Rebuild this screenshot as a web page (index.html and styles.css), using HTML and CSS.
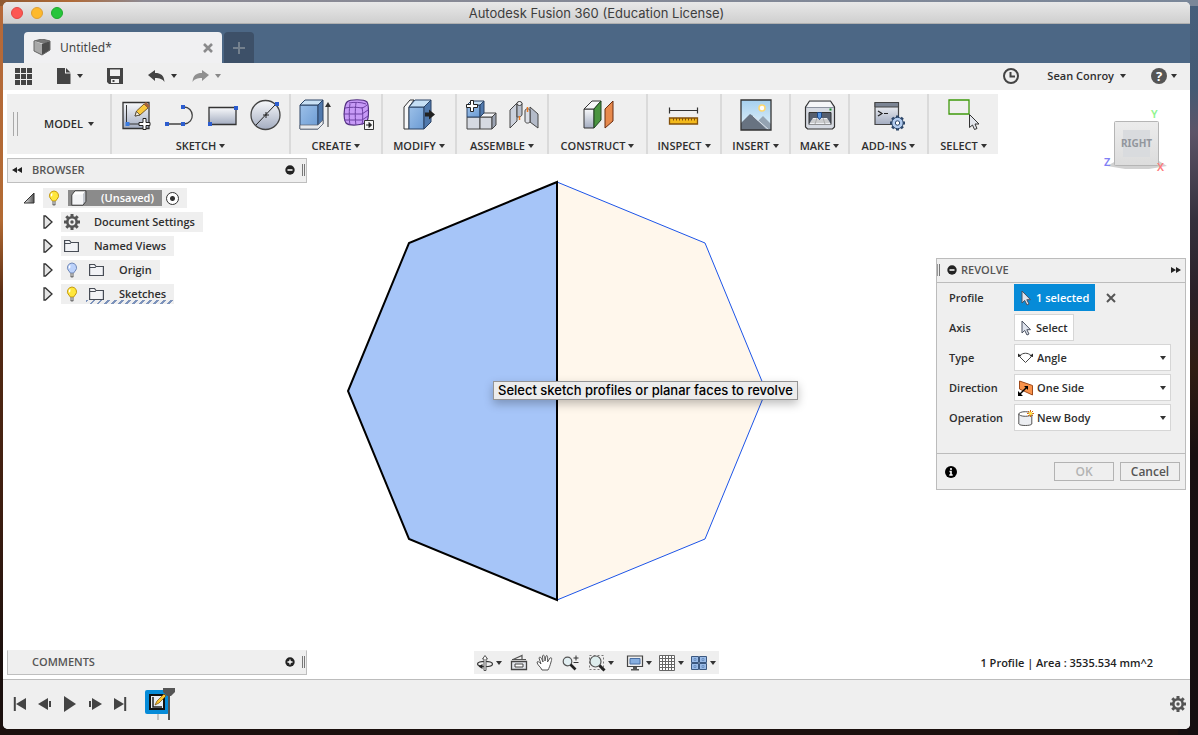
FILE: index.html
```html
<!DOCTYPE html>
<html lang="en">
<head>
<meta charset="utf-8">
<title>Autodesk Fusion 360 (Education License)</title>
<link rel="stylesheet" href="styles.css">
</head>
<body>
<svg class="defs" aria-hidden="true">
  <defs>
    <linearGradient id="steel" x1="0" y1="0" x2="0" y2="1"><stop offset="0" stop-color="#f8f9fb"/><stop offset="1" stop-color="#a3acc0"/></linearGradient>
    <linearGradient id="blue" x1="0" y1="0" x2="1" y2="1"><stop offset="0" stop-color="#9cc0e8"/><stop offset="1" stop-color="#6b9bd4"/></linearGradient>
    <linearGradient id="cubeface" x1="0" y1="0" x2="0" y2="1"><stop offset="0" stop-color="#ececec"/><stop offset="1" stop-color="#dcdcdc"/></linearGradient>
    <linearGradient id="tri" x1="0" y1="0" x2="1" y2="0"><stop offset="0" stop-color="#eee"/><stop offset="1" stop-color="#555"/></linearGradient>
    <linearGradient id="sky" x1="0" y1="0" x2="0" y2="1"><stop offset="0" stop-color="#a5d0ee"/><stop offset="1" stop-color="#e4f2fa"/></linearGradient>
  </defs>
  <symbol id="gear" viewBox="0 0 16 16"><circle cx="8" cy="8" r="4.700" fill="none" stroke="currentColor" stroke-width="2.600"/><circle cx="8" cy="8" r="1.700" fill="currentColor"/><path d="M8 0v3M8 13v3M0 8h3M13 8h3M2.300 2.300l2.200 2.200M11.500 11.500l2.200 2.200M2.300 13.700l2.200-2.200M11.500 4.500l2.200-2.200" stroke="currentColor" stroke-width="3"/></symbol>
  <symbol id="bulb" viewBox="0 0 16 16"><path d="M8 1a4.700 4.700 0 0 0-3.200 8c.9.800 1.300 1.300 1.400 2h3.600c.1-.7.500-1.200 1.400-2A4.700 4.700 0 0 0 8 1z" fill="var(--bulb)" stroke="var(--bulb-edge)"/><path d="M6.300 3.500c-1 .7-1 2-.7 2.800" stroke="#fff" stroke-width="1.500" fill="none"/><path d="M6 11.500h4v2.500l-1 1.500H7l-1-1.500z" fill="#777"/><path d="M6 13h4" stroke="#ddd"/></symbol>
  <symbol id="folder" viewBox="0 0 16 16"><path d="M.6 13.500V2.500h4.900l1.500 2h7.400v9z" fill="#f2f3f6" stroke="#474c55" stroke-width="1.200"/><path d="M1 5.500h5.500L7.500 4.500" fill="none" stroke="#474c55"/></symbol>
  <symbol id="twist" viewBox="0 0 10 14"><path d="M1 1h1.500L9 7l-6.500 6H1z" fill="#e4e4e4" stroke="#333" stroke-width="1.300"/></symbol>
  <symbol id="arrow" viewBox="0 0 12 16"><path d="M2 1v12l2.700-2.600L7 15l2-1-2.200-4.300h3.700z" fill="#dfe4ee" stroke="#4a5160"/></symbol>
</svg>

<div class="window">
  <header class="titlebar">
    <div class="lights"><span class="light red"></span><span class="light amber"></span><span class="light green"></span></div>
    <span class="title">Autodesk Fusion 360 (Education License)</span>
    <span></span>
  </header>

  <nav class="tabs">
    <div class="tab">
      <svg width="18" height="18" viewBox="0 0 18 18"><path d="M1 2l8-2 8 2-6 3z" fill="#777"/><path d="M1 2l8 3v11L1 12z" fill="#a8a8a8"/><path d="M9 5l8-3v9l-8 5z" fill="#4c4c4c"/><path d="M1 2l8-2 8 2v9l-8 5-8-4z" fill="none" stroke="#666"/></svg>
      <span class="tab-name">Untitled*</span>
      <button class="tab-close" aria-label="Close tab"><svg width="10" height="10" viewBox="0 0 10 10"><path d="M1 1l8 8M9 1L1 9" stroke="#8a8a8c" stroke-width="2.600"/></svg></button>
    </div>
    <button class="tab-new" aria-label="New tab"><svg width="12" height="12" viewBox="0 0 12 12"><path d="M6 0v12M0 6h12" stroke="#74808d" stroke-width="2"/></svg></button>
  </nav>

  <div class="quickbar">
    <button aria-label="Data panel"><svg width="17" height="17" viewBox="0 0 17 17"><path d="M0 2.500h17M0 8.500h17M0 14.500h17" stroke="#444" stroke-width="5" stroke-dasharray="5 1"/></svg></button>
    <button class="q-file" aria-label="File"><svg width="14" height="16" viewBox="0 0 14 16"><path d="M0 0h8v5.500h5.500V16H0z" fill="#444"/><path d="M9 0l4.500 4.500H9z" fill="#444"/></svg><i class="caret"></i></button>
    <button class="q-save" aria-label="Save"><svg width="16" height="16" viewBox="0 0 16 16"><path d="M0 0h16v16H2l-2-2z" fill="#444"/><path d="M3 1.500h10v6.500H3zM4 11h8v4H4z" fill="#f0f0f0"/><path d="M5.500 12h2v2h-2z" fill="#444"/></svg></button>
    <button class="q-undo" aria-label="Undo"><svg width="17" height="14" viewBox="0 0 17 14"><path d="M0 6L7 1v3c6 0 9 2.500 9.500 9-2-3-4.500-4-9.500-4v3z" fill="#444"/></svg><i class="caret"></i></button>
    <button class="q-redo" aria-label="Redo"><svg width="17" height="14" viewBox="0 0 17 14"><path d="M17 6l-7-5v3C4 4 1 6.500.5 13c2-3 4.500-4 9.500-4v3z" fill="#909090"/></svg><i class="caret dim"></i></button>
    <button class="q-clock" aria-label="Job status"><svg width="16" height="16" viewBox="0 0 16 16"><circle cx="8" cy="8" r="7" fill="none" stroke="#444" stroke-width="2"/><path d="M7.500 4v4.500H12" fill="none" stroke="#444" stroke-width="2"/></svg></button>
    <button class="q-user">Sean Conroy<i class="caret"></i></button>
    <button class="q-help" aria-label="Help"><span class="help">?</span><i class="caret"></i></button>
  </div>

  <main class="workspace">
    <svg class="sketch" width="426" height="426" viewBox="0 0 426 426">
      <path d="M213 4L361 65 422 213 361 361 213 422z" fill="#fff7ec" stroke="#1c54e8"/>
      <path d="M213 4L65 65 4 213l61 148 148 61z" fill="#a6c5f8" stroke="#000" stroke-width="2"/>
    </svg>

    <div class="ribbon">
      <div class="group g-model"><span class="grip"></span><button>MODEL<i class="caret"></i></button></div>
      <div class="group g-sketch">
        <div class="tools">
          <svg viewBox="0 0 32 32"><path d="M3 3.500h26v26H3z" fill="url(#steel)" stroke="#333" stroke-width="1.300"/><path d="M6.500 6v19H20" fill="none" stroke="#333"/><path d="M5.500 23h4v4h-4z" fill="#3a7be0"/><path d="M15 17l1.500-5L24 5l4 4-8 7z" fill="#f9c83c" stroke="#5b3d12" stroke-width=".8"/><path d="M24 5l2-2 4 4-2 2z" fill="#a4633c"/><path d="M15 17l1.500-4.500L20 16z" fill="#f6ead3" stroke="#333" stroke-width=".7"/><path d="M23 19.500h3v4h4v3h-4v4h-3v-4h-4v-3h4z" fill="#fff" stroke="#222"/></svg>
          <svg viewBox="0 0 32 32"><path d="M4 25h17c12-1 10-17 0-17h-1" fill="none" stroke="#444" stroke-width="1.300"/><path d="M2 23h4v4H2zM18 23h4v4h-4zM18 6h4v4h-4z" fill="#2c5dcf"/></svg>
          <svg viewBox="0 0 32 32"><path d="M3 8.500h27v17H3z" fill="url(#steel)" stroke="#333" stroke-width="1.300"/><path d="M2 23h4v4H2zM28 7h4v4h-4z" fill="#2c5dcf"/></svg>
          <svg viewBox="0 0 32 32"><circle cx="16.500" cy="16" r="14.500" fill="url(#steel)" stroke="#444" stroke-width="1.300"/><path d="M7 26L26 6M14 16h6M17 13v6" stroke="#222"/><path d="M26 3h4v4h-4z" fill="#2c5dcf"/></svg>
        </div>
        <button>SKETCH<i class="caret"></i></button>
      </div>
      <div class="group g-create">
        <div class="tools">
          <svg viewBox="0 0 32 32"><path d="M1 6h18v24H1z" fill="url(#blue)" stroke="#2b4365"/><path d="M1 6l5-5h18l-5 5z" fill="#c8e0f4" stroke="#2b4365"/><path d="M19 6l5-5v24l-5 5z" fill="#5079ad" stroke="#2b4365"/><path d="M1 26h18l5-5v4l-5 5H1z" fill="#e6e9ed" stroke="#59606c" stroke-width=".7"/><path d="M29 6v22" stroke="#333"/><path d="M26 8l3-5 3 5z" fill="#333"/></svg>
          <svg viewBox="0 0 32 32"><path d="M5 3c3-3 17-3 20 0 2 3 2 16 0 19-4 5-18 5-21 2-3-4-2-18 1-21z" fill="#c79af7" stroke="#523080" stroke-width="1.200"/><path d="M3 9c5-1 12-1 17 0 3-1 5-3 6-4M8 5C7 10 7 21 8 26M14 4c-1 6-1 17 0 22M20 8c1 5 1 13 0 18M1.500 15H20l6-4M2 21h18l6-4M7 4c5-1 12-1 17 1" fill="none" stroke="#6c40a3"/><path d="M22.500 21.500h9v9h-9z" fill="#f5f5f5" stroke="#333"/><path d="M24 26h3M27 23.500l2.500 2.500-2.500 2.500z" fill="#222" stroke="#222"/></svg>
        </div>
        <button>CREATE<i class="caret"></i></button>
      </div>
      <div class="group g-modify">
        <div class="tools">
          <svg viewBox="0 0 32 32"><path d="M1 8l6-7h4L6 8v22H1z" fill="#f6f7f8" stroke="#333"/><path d="M6 8h15v22H6z" fill="url(#blue)" stroke="#2b4365"/><path d="M6 8l6-7h16l-7 7z" fill="#c6dff5" stroke="#2b4365"/><path d="M21 8l7-7v22l-7 7z" fill="#5079ad" stroke="#2b4365"/><path d="M22 13.500h4v-3l6 5-6 5v-3h-4z" fill="#222"/></svg>
        </div>
        <button>MODIFY<i class="caret"></i></button>
      </div>
      <div class="group g-assemble">
        <div class="tools">
          <svg viewBox="0 0 32 32"><path d="M2 18h13v12H2z" fill="#d5d9e1" stroke="#444"/><path d="M15 18h12v12H15z" fill="#d5d9e1" stroke="#444"/><path d="M15 18l4-4h12l-4 4z" fill="#f2f3f6" stroke="#444"/><path d="M27 18l4-4v12l-4 4z" fill="#9ba3b2" stroke="#444"/><path d="M2 6h13v12H2z" fill="url(#blue)" stroke="#2b4365"/><path d="M2 6l4-4h13l-4 4z" fill="#c6dff5" stroke="#2b4365"/><path d="M15 6l4-4v12l-4 4z" fill="#5079ad" stroke="#2b4365"/><path d="M5.500 1.500h3v4h4v3h-4v4h-3v-4h-4v-3h4z" fill="#fff" stroke="#222"/></svg>
          <svg viewBox="0 0 32 32"><path d="M2 11l7-7v18l-7 7z" fill="#ccd1dc" stroke="#444"/><path d="M9 5c0-3 5-3 5 0v10c0 3-3 3-5 3z" fill="#b9c0cd" stroke="#444"/><ellipse cx="11.500" cy="4.500" rx="2.500" ry="2" fill="#f0f1f4" stroke="#444"/><path d="M22 8l8 7v14l-8-6z" fill="#b4bbc9" stroke="#444"/><path d="M17 12c0-3 5-3 5 0v11c-2 2-5 1-5-1z" fill="#dde0e7" stroke="#444"/><path d="M11.500 17v4M19.500 8v5" stroke="#e77722" stroke-width="1.500"/></svg>
        </div>
        <button>ASSEMBLE<i class="caret"></i></button>
      </div>
      <div class="group g-construct">
        <div class="tools">
          <svg viewBox="0 0 32 32"><path d="M2 10h10v19H2z" fill="url(#steel)" stroke="#333"/><path d="M2 10l8-8h9l-7 8z" fill="#f7f7f9" stroke="#333"/><path d="M12 10l7-8v19l-7 8z" fill="#4a9440" stroke="#1e4420"/><path d="M23 10l8-8v20l-8 7z" fill="#e78a4d" stroke="#6b2c10"/></svg>
        </div>
        <button>CONSTRUCT<i class="caret"></i></button>
      </div>
      <div class="group g-inspect">
        <div class="tools">
          <svg viewBox="0 0 32 32"><path d="M1 11.500h28M1.500 8.500v6M29.500 8.500v6" stroke="#333" stroke-width="1.200"/><path d="M1.500 19h28v6h-28z" fill="#f3b91b" stroke="#84510a" stroke-width="1.300"/><path d="M5.500 19v2.500M8.500 19v2.500M11.500 19v2.500M14.500 19v2.500M17.500 19v2.500M20.500 19v2.500M23.500 19v2.500M26.500 19v2.500" stroke="#84510a"/></svg>
        </div>
        <button>INSPECT<i class="caret"></i></button>
      </div>
      <div class="group g-insert">
        <div class="tools">
          <svg viewBox="0 0 32 32"><path d="M1 1h30v30H1z" fill="url(#sky)"/><path d="M14 26l9-9 8 8v6H14z" fill="#94a3b2"/><path d="M1 24l9-9 3 2 14 14H1z" fill="#687381"/><circle cx="22" cy="9" r="3" fill="#fff" stroke="#ffd86e" stroke-width="1.500"/><path d="M13 17l16 14" stroke="#dce3ea"/><path d="M1 1h30v30H1z" fill="none" stroke="#333" stroke-width="1.300"/></svg>
        </div>
        <button>INSERT<i class="caret"></i></button>
      </div>
      <div class="group g-make">
        <div class="tools">
          <svg viewBox="0 0 32 32"><path d="M1.500 8l4-6h21l4 6v20l-2 2h-25l-2-2z" fill="#d6dae2" stroke="#333" stroke-width="1.200"/><path d="M3 8l3-5h20l3 5z" fill="#f5f6f8"/><path d="M2 8.500h28" stroke="#8c93a0"/><path d="M5 13.500h22v12H5z" fill="#555e6e" stroke="#333"/><path d="M9 19h14l4 6.500H5z" fill="#eceef2"/><path d="M8 21h16M6.500 23h19M13 19l-2 6M19 19l2 6" stroke="#aaa"/><path d="M13.500 13.500h4v4.500l-2 2.500-2-2.500z" fill="#5794e2" stroke="#1d4784"/><path d="M25.500 9.500h2v2h-2z" fill="#168c26"/></svg>
        </div>
        <button>MAKE<i class="caret"></i></button>
      </div>
      <div class="group g-addins">
        <div class="tools">
          <svg viewBox="0 0 32 32"><path d="M2 3.500h23.500v22H2z" fill="url(#steel)" stroke="#444" stroke-width="1.200"/><path d="M2 3.500h23.500V8H2z" fill="#7c8594" stroke="#444"/><path d="M5 12l4 2.500L5 17M11 14.500h4" fill="none" stroke="#222" stroke-width="1.200"/><g stroke="#2c4669"><path d="M24.500 16.500v3M24.500 28.500v3M17 24h3M29 24h3M19.200 18.700l2.200 2.200M27.600 27.100l2.200 2.200M19.200 29.300l2.200-2.200M27.600 20.900l2.200-2.200" stroke-width="3"/><circle cx="24.500" cy="24" r="5.700" fill="#b3cdf0"/><circle cx="24.500" cy="24" r="2.200" fill="#fff"/></g></svg>
        </div>
        <button>ADD-INS<i class="caret"></i></button>
      </div>
      <div class="group g-select">
        <div class="tools">
          <svg viewBox="0 0 32 32"><path d="M1 1h20v14H1z" fill="none" stroke="#3f9a0c" stroke-width="1.300"/><path d="M21.500 15.500v13l3-2.500 2 4.500 2.500-1-2-4.500h4z" fill="#e3e6ec" stroke="#333"/></svg>
        </div>
        <button>SELECT<i class="caret"></i></button>
      </div>
    </div>

    <div class="stage">
      <section class="browser">
        <header class="panel-head">
          <button aria-label="Collapse browser"><svg width="10" height="8" viewBox="0 0 10 8"><path d="M5 1v6L0 4zM10 1v6L5 4z" fill="#222"/></svg></button>
          <h2>BROWSER</h2>
          <button aria-label="Minimise browser"><svg width="10" height="10" viewBox="0 0 10 10"><circle cx="5" cy="5" r="4.700" fill="#222"/><path d="M2.500 5h5" stroke="#fff" stroke-width="1.500"/></svg></button>
          <span class="bars"></span>
        </header>
        <ul class="tree">
          <li class="root">
            <button class="twist" aria-label="Collapse"><svg width="12" height="12" viewBox="0 0 12 12"><path d="M11 1v10H1z" fill="url(#tri)" stroke="#333"/></svg></button>
            <div class="chip root-chip">
              <svg class="ico lit"><use href="#bulb"/></svg>
              <span class="doc"><svg class="ico" viewBox="0 0 16 16"><path d="M1 4.500L4 1h10.500L12 4.500V15H1z" fill="#fff"/><path d="M12 4.500L14.500 1v10.500L12 15z" fill="#c3c7ce"/><path d="M1 4.500h11V15H1z" fill="#f3f4f6"/><path d="M.8 5L4 .8h11v10.500L12 15.200H.8z" fill="none" stroke="#444" stroke-linejoin="round"/></svg>(Unsaved)</span>
              <input type="radio" name="active" aria-label="Activate component" checked>
            </div>
          </li>
          <li><button class="twist" aria-label="Expand"><svg width="10" height="14"><use href="#twist"/></svg></button><div class="chip"><svg class="ico dark"><use href="#gear"/></svg><span class="name">Document Settings</span></div></li>
          <li><button class="twist" aria-label="Expand"><svg width="10" height="14"><use href="#twist"/></svg></button><div class="chip"><svg class="ico"><use href="#folder"/></svg><span class="name">Named Views</span></div></li>
          <li><button class="twist" aria-label="Expand"><svg width="10" height="14"><use href="#twist"/></svg></button><div class="chip"><svg class="ico unlit"><use href="#bulb"/></svg><svg class="ico second"><use href="#folder"/></svg><span class="name">Origin</span></div></li>
          <li><button class="twist" aria-label="Expand"><svg width="10" height="14"><use href="#twist"/></svg></button><div class="chip hatched"><svg class="ico lit"><use href="#bulb"/></svg><svg class="ico second"><use href="#folder"/></svg><span class="name">Sketches</span></div></li>
        </ul>
      </section>

      <aside class="side">
        <svg class="viewcube" width="70" height="68" viewBox="0 0 70 68">
          <path d="M4 60l9-5h43l8 5-18 3H22z" fill="#000" opacity=".18"/>
          <text x="48" y="12" class="ax-y">Y</text><text x="1" y="60" class="ax-z">Z</text>
          <rect x="11.500" y="15.500" width="44" height="44" rx="1" fill="url(#cubeface)" stroke="#b5b5b5"/>
          <rect x="20" y="24" width="27" height="27" fill="#d9dbde"/>
          <text x="33.500" y="41" class="face">RIGHT</text><text x="54" y="65" class="ax-x">X</text>
        </svg>

        <form class="revolve">
          <header class="revolve-head">
            <span class="bars"></span>
            <button type="button" aria-label="Minimise"><svg width="10" height="10" viewBox="0 0 10 10"><circle cx="5" cy="5" r="4.700" fill="#222"/><path d="M2.500 5h5" stroke="#fff" stroke-width="1.500"/></svg></button>
            <h2>REVOLVE</h2>
            <button type="button" aria-label="Expand dialog"><svg width="10" height="8" viewBox="0 0 10 8"><path d="M0 1v6l5-3zM5 1v6l5-3z" fill="#222"/></svg></button>
          </header>
          <div class="fields">
            <label for="profile">Profile</label>
            <div class="field"><button type="button" id="profile" class="pick on"><svg width="12" height="16"><use href="#arrow"/></svg>1 selected</button><button type="button" class="clear" aria-label="Clear profile"><svg width="10" height="10" viewBox="0 0 10 10"><path d="M1 1l8 8M9 1L1 9" stroke="#555" stroke-width="2"/></svg></button></div>
            <label for="axis">Axis</label>
            <div class="field"><button type="button" id="axis" class="pick"><svg width="12" height="16"><use href="#arrow"/></svg>Select</button></div>
            <label for="type">Type</label>
            <div class="field drop"><svg width="16" height="16" viewBox="0 0 16 16"><path d="M1.500 6.500l6 6 6-6M2 5.500c3-3 8-3 11 0" fill="none" stroke="#444"/><path d="M0 7V3.500L3.500 6zM15 7V3.500L11.500 6z" fill="#222"/></svg><select id="type"><option>Angle</option></select><i class="caret"></i></div>
            <label for="direction">Direction</label>
            <div class="field drop"><svg width="16" height="16" viewBox="0 0 16 16"><path d="M1.500 1l13 4.500V15l-13-6z" fill="#f9924a" stroke="#a04a1a"/><path d="M2 14l7-7" stroke="#000" stroke-width="1.500"/><path d="M0 16v-5l5 5zM6 6h4v4z" fill="#000"/></svg><select id="direction"><option>One Side</option></select><i class="caret"></i></div>
            <label for="operation">Operation</label>
            <div class="field drop"><svg width="16" height="16" viewBox="0 0 16 16"><path d="M.8 4v10c1 2 12 2 13 0V4z" fill="#eceef2" stroke="#555"/><ellipse cx="7.300" cy="4" rx="6.500" ry="2.300" fill="#fff" stroke="#555"/><path d="M12.500 0v7M9 3.500h7M10 1l5 5M15 1l-5 5" stroke="#d9660a"/><circle cx="12.500" cy="3.500" r="1.800" fill="#ffe14a"/></svg><select id="operation"><option>New Body</option></select><i class="caret"></i></div>
          </div>
          <footer class="revolve-foot">
            <button type="button" class="info" aria-label="Information"><svg width="12" height="12" viewBox="0 0 12 12"><circle cx="6" cy="6" r="6" fill="#000"/><path d="M6 2v2M4.500 5.500H6V9M4.300 9h3.400" stroke="#fff" stroke-width="1.600" fill="none"/></svg></button>
            <button type="button" class="btn" disabled>OK</button>
            <button type="button" class="btn">Cancel</button>
          </footer>
        </form>
      </aside>
    </div>

    <div class="bottom">
      <section class="comments panel-head">
        <h2>COMMENTS</h2>
        <button aria-label="Add comment"><svg width="10" height="10" viewBox="0 0 10 10"><circle cx="5" cy="5" r="4.700" fill="#222"/><path d="M2.500 5h5M5 2.500v5" stroke="#fff" stroke-width="1.300"/></svg></button>
        <span class="bars"></span>
      </section>
      <div class="navbar">
        <div class="navset wide">
          <button aria-label="Orbit"><svg viewBox="0 0 18 18"><ellipse cx="9" cy="10" rx="7.500" ry="2.700" fill="none" stroke="#333" stroke-width="1.200"/><path d="M8 16.500V5H6.500L9 1.500 11.500 5H10v11.500z" fill="#fff" stroke="#555"/><path d="M6.500 10v5l-4-2.500z" fill="#222"/></svg><i class="caret"></i></button>
          <button aria-label="Look at"><svg viewBox="0 0 18 18"><path d="M1.500 7.500h15v8h-15z" fill="#e3e6eb" stroke="#444" stroke-width="1.300"/><path d="M5 10h8v3H5z" fill="#fff" stroke="#444"/><path d="M3 5.500l9-4v4M2 5.500h14" fill="none" stroke="#555" stroke-width="1.200"/></svg></button>
          <button aria-label="Pan"><svg viewBox="0 0 18 18"><path d="M6 16c-1-3-5-5-5-8 1-1 2 0 4 2L3 4c1-2 2-1 4 4L6.500 2c1-2 2-1 2.500 5L10 2c1-1 2-1 1.500 6L14 4c2-1 2 1 1 4-1 4-2 6-3 8z" fill="#fff" stroke="#555"/></svg></button>
          <button aria-label="Zoom"><svg viewBox="0 0 18 18"><circle cx="5.500" cy="7.500" r="4.300" fill="#e2eff2" stroke="#555" stroke-width="1.200"/><path d="M8.500 10.500l5 5" stroke="#222" stroke-width="2.600"/><path d="M11.500 4h5M14 1.500v5M11.500 8.500h5" stroke="#333"/></svg></button>
          <button aria-label="Fit"><svg viewBox="0 0 18 18"><path d="M1.500 1.500h14v14h-14z" fill="none" stroke="#777" stroke-dasharray="2 2"/><circle cx="7.500" cy="7.500" r="5.500" fill="#deeeee" stroke="#555" stroke-width="1.200"/><path d="M11.500 11.500l5 5" stroke="#222" stroke-width="3"/></svg><i class="caret"></i></button>
        </div>
        <div class="navset">
          <button aria-label="Display settings"><svg viewBox="0 0 18 18"><path d="M1.500 2h15v10.500h-15z" fill="#eee" stroke="#444" stroke-width="1.200"/><path d="M4 4.500h10v5.500H4z" fill="#86aee0" stroke="#4a6fa3"/><path d="M7 13h4v2h2v1.500H5V15h2z" fill="#555"/></svg><i class="caret"></i></button>
          <button aria-label="Grid settings"><svg viewBox="0 0 18 18"><path d="M1.500 1.500h15v15h-15zM4.500 1v16M7.500 1v16M10.500 1v16M13.500 1v16M1 4.500h16M1 7.500h16M1 10.500h16M1 13.500h16" fill="#fff" stroke="#666"/></svg><i class="caret"></i></button>
          <button aria-label="Viewports"><svg viewBox="0 0 18 18"><path d="M1.500 2.500h7v6h-7zM9.500 2.500h7v6h-7zM1.500 9.500h7v6h-7zM9.500 9.500h7v6h-7z" fill="#9bbce8" stroke="#3b5880"/><path d="M4 4.500h2v2H4zM12 4.500h2v2h-2zM4 11.500h2v2H4zM12 11.500h2v2h-2z" fill="none" stroke="#6d92c4"/></svg><i class="caret"></i></button>
        </div>
      </div>
      <output class="status">1 Profile | Area : 3535.534 mm^2</output>
    </div>

    <div class="tooltip" role="tooltip">Select sketch profiles or planar faces to revolve</div>
  </main>

  <footer class="timeline">
    <div class="play">
      <button aria-label="Go to start"><svg viewBox="0 0 14 14"><path d="M1.800 0v14" stroke="#444" stroke-width="2"/><path d="M13 1v12L3 7z" fill="#444"/></svg></button>
      <button aria-label="Step back"><svg viewBox="0 0 14 14"><path d="M10 1v12L0 7z" fill="#444"/><path d="M12 4v6" stroke="#444" stroke-width="2"/></svg></button>
      <button aria-label="Play"><svg viewBox="0 0 14 16"><path d="M1 0v16l12-8z" fill="#444"/></svg></button>
      <button aria-label="Step forward"><svg viewBox="0 0 14 14"><path d="M4 1v12l10-6z" fill="#444"/><path d="M2 4v6" stroke="#444" stroke-width="2"/></svg></button>
      <button aria-label="Go to end"><svg viewBox="0 0 14 14"><path d="M1 1v12l10-6z" fill="#444"/><path d="M12.200 0v14" stroke="#444" stroke-width="2"/></svg></button>
    </div>
    <button class="feature" aria-label="Sketch feature"><svg width="31" height="34" viewBox="0 0 31 34"><path d="M13 26v7" stroke="#c4c4c4" stroke-width="2"/><rect y="3" width="24" height="24" rx="2" fill="#068bd8"/><path d="M5 8h14v14H5z" fill="#e8edf3" stroke="#111" stroke-width="2"/><path d="M8 10v10h9" fill="none" stroke="#222" stroke-width="1.500"/><path d="M10 18l2-4 7-7 2 2-7 7z" fill="#ffc52e" stroke="#6b470d" stroke-width=".7"/><path d="M18 1h12v4l-4 4h-4l-4-4z" fill="#555"/><path d="M24 5v28" stroke="#555" stroke-width="2"/></svg></button>
    <button class="settings" aria-label="Timeline settings"><svg class="ico dark"><use href="#gear"/></svg></button>
  </footer>
</div>
</body>
</html>
```
FILE: styles.css
```css
* { box-sizing: border-box; }

body {
  margin: 0;
  height: 100vh;
  padding: 2px 8px 6px 3px;
  font: 600 11px/16px "Open Sans", "Noto Sans", sans-serif;
  color: #2e2e2e;
  background:
    linear-gradient(90deg, #8f5a32 0, #b06a38 6%, #8c8a94 12%, #7a8799 100%) top / 100% 6px no-repeat,
    linear-gradient(#465f7c 0, #445a74 12%, #5c5468 18%, #34303c 30%, #2b2028 40%, #301c12 50%, #180f10 62%, #150e10 100%) right / 20px 100% no-repeat,
    linear-gradient(#b5693a 0, #b26a33 30%, #5a2d14 40%, #3c1d10 70%, #1b100e 90%, #1b100e 100%);
}

button, select { font: inherit; color: inherit; }
button {
  display: flex;
  align-items: center;
  padding: 0;
  border: 0;
  background: none;
  white-space: nowrap;
}
h2 { margin: 0; font: inherit; color: #555; }
svg { display: block; flex: none; }
ul { list-style: none; margin: 0; padding: 0; }

.defs { position: absolute; width: 0; height: 0; }

.caret {
  flex: none;
  border: 3px solid transparent;
  border-top: 4px solid #333;
  border-bottom: 0;
}
.caret.dim { border-top-color: #888; }

.ico { width: 16px; height: 16px; }
.dark { color: #555; }
.lit { --bulb: #ffe73c; --bulb-edge: #c59a10; }
.unlit { --bulb: #bcd2fb; --bulb-edge: #7088b8; }

.window {
  height: 100%;
  display: flex;
  flex-direction: column;
  border-radius: 5px;
  overflow: hidden;
  background: #fff;
}

.titlebar {
  display: grid;
  grid-template-columns: 1fr auto 1fr;
  align-items: center;
  height: 22px;
  padding: 0 8px;
  background: linear-gradient(#e8e8e8, #cfcfcf);
  border-bottom: 1px solid #b0b0b0;
}
.title { font: 400 13px/20px Inter, "Liberation Sans", sans-serif; color: #3d3d3d; }
.lights { display: flex; gap: 8px; }
.light { width: 12px; height: 12px; border-radius: 50%; }
.red { background: #fc5753; border: 1px solid #df4744; }
.amber { background: #fdb92d; border: 1px solid #de9f34; }
.green { background: #27c53b; border: 1px solid #1fa92c; }

.tabs {
  display: flex;
  align-items: flex-end;
  gap: 2px;
  height: 39px;
  padding-left: 21px;
  background: #4c6785;
}
.tab {
  display: flex;
  align-items: center;
  width: 198px;
  height: 31px;
  padding: 1px 9px 0;
  border-radius: 4px 4px 0 0;
  background: #f0f0f2;
}
.tab-name {
  flex: 1;
  margin-left: 9px;
  font: 400 12px/18px "Noto Sans", sans-serif;
  color: #444;
}
.tab-new {
  justify-content: center;
  width: 30px;
  height: 31px;
  border-radius: 4px 4px 0 0;
  background: #3d5068;
}

.quickbar {
  display: flex;
  align-items: center;
  height: 27px;
  padding: 0 13px 1px 12px;
  background: #efefef;
}
.quickbar .caret { margin-left: 6px; }
.q-file { margin-left: 25px; }
.q-save { margin-left: 24px; }
.q-undo { margin-left: 25px; }
.q-redo { margin-left: 15px; }
.q-clock { margin-left: auto; }
.q-user { margin-left: 28px; }
.q-help { margin-left: 25px; }
.quickbar .q-help .caret { margin-left: 4px; }
.help {
  width: 16px;
  height: 16px;
  border-radius: 50%;
  background: #555;
  color: #fff;
  font-size: 13px;
  font-weight: 700;
  text-align: center;
}

.workspace {
  position: relative;
  flex: 1;
  min-height: 0;
  display: flex;
  flex-direction: column;
  padding: 4px;
}
.sketch { position: absolute; left: 341px; top: 88px; }

.ribbon {
  position: relative;
  align-self: flex-start;
  display: flex;
  height: 60px;
  background: #efefef;
}
.group {
  display: flex;
  flex-direction: column;
  align-items: center;
  justify-content: space-between;
  padding-top: 5px;
  border-right: 2px solid #dadada;
}
.group:last-child { border-right: 0; }
.group .caret { margin-left: 3px; }
.tools { display: flex; gap: 11px; }
.tools svg { width: 32px; height: 32px; }
.g-model { width: 105px; flex-direction: row; justify-content: flex-start; padding: 0 0 0 6px; }
.g-model button { margin-left: 26px; }
.g-model .caret { margin-left: 5px; }
.grip { width: 5px; height: 24px; border: 1px solid #a9a9a9; border-width: 0 1px; }
.g-sketch { width: 179px; }
.g-create { width: 92px; }
.g-modify { width: 74px; }
.g-assemble { width: 92px; }
.g-construct { width: 99px; }
.g-inspect { width: 74px; }
.g-insert { width: 69px; }
.g-make { width: 59px; }
.g-addins { width: 79px; }
.g-select { width: 69px; }

.stage {
  position: relative;
  flex: 1;
  min-height: 0;
  display: flex;
  justify-content: space-between;
}
.browser { width: 300px; margin-top: 4px; }
.panel-head {
  display: flex;
  align-items: center;
  height: 25px;
  padding: 0 0 1px 4px;
  background: #efefef;
  border: 1px solid #bfbfbf;
}
.panel-head h2 { flex: 1; margin-left: 10px; }
.bars { width: 3px; height: 12px; border: 1px solid #777; border-width: 0 1px; }
.panel-head .bars { margin: 0 1px 0 7px; }

.tree { display: grid; gap: 4px; padding: 5px 0 0 36px; }
.tree li { display: flex; align-items: center; gap: 6px; }
.tree .root { margin-left: -20px; gap: 8px; }
.chip {
  display: flex;
  align-items: center;
  height: 20px;
  padding: 0 8px 0 3px;
  background: #efefef;
}
.twist { width: 12px; }
.name { margin-left: 14px; }
.second { margin-left: 9px; }
.root-chip { gap: 6px; }
.doc {
  display: flex;
  align-items: center;
  gap: 14px;
  height: 16px;
  padding: 0 8px 0 3px;
  background: #8b8b8b;
  color: #fff;
}
.root-chip input {
  appearance: none;
  width: 13px;
  height: 13px;
  margin: 0 0 0 -2px;
  border: 1px solid #333;
  border-radius: 50%;
  background: radial-gradient(circle, #333 0 2px, #fff 3px);
}
.hatched {
  background:
    repeating-linear-gradient(135deg, #7d93bb 0 2px, transparent 2px 5px) 25px 16px / 100% 4px no-repeat,
    #efefef;
}

.side { display: flex; flex-direction: column; align-items: flex-end; }
.viewcube { margin: -48px 13px 0 0; }
.face { font: 700 10px "Noto Sans", sans-serif; fill: #92969d; text-anchor: middle; }
.ax-x, .ax-y, .ax-z { font: 600 11px "Noto Sans", sans-serif; }
.ax-x { fill: #ff7b7b; }
.ax-y { fill: #90f590; }
.ax-z { fill: #8080f5; }

.revolve {
  width: 250px;
  margin-top: 84px;
  background: #efefef;
  border: 1px solid #bcbcbc;
}
.revolve-head {
  display: flex;
  align-items: center;
  height: 24px;
  padding: 0 4px 1px 0;
  border-bottom: 1px solid #bcbcbc;
}
.revolve-head .bars { margin-right: 7px; border-left-color: #999; }
.revolve-head h2 { flex: 1; margin-left: 4px; }
.fields {
  display: grid;
  grid-template-columns: 65px 1fr;
  grid-auto-rows: 27px;
  gap: 3px 0;
  align-items: center;
  padding: 1px 14px 22px 12px;
}
.field { display: flex; height: 27px; }
.pick {
  gap: 4px;
  padding: 0 5px;
  background: #fff;
  border: 1px solid #d6d6d6;
}
.pick.on { background: #068bd8; border-color: #068bd8; color: #fff; }
.clear { margin-left: 11px; }
.drop { position: relative; }
.drop svg { position: absolute; left: 4px; top: 6px; pointer-events: none; }
.drop .caret { position: absolute; right: 5px; top: 12px; pointer-events: none; }
.drop select {
  appearance: none;
  width: 100%;
  padding: 0 16px 0 22px;
  background: #fff;
  border: 1px solid #d6d6d6;
  border-radius: 0;
}
.revolve-foot {
  display: flex;
  align-items: center;
  gap: 6px;
  height: 36px;
  padding: 0 5px 0 8px;
  border-top: 1px solid #bcbcbc;
}
.info { margin-right: auto; }
.btn {
  justify-content: center;
  width: 60px;
  height: 19px;
  border: 1px solid #b3b3b3;
  font: 600 12px/16px "Open Sans", sans-serif;
  color: #555;
}
.btn:disabled { color: #b3b3b3; }

.bottom {
  position: relative;
  display: grid;
  grid-template-columns: 1fr auto 1fr;
  align-items: center;
}
.comments { width: 300px; padding-left: 14px; border-top-color: #efefef; }
.navbar {
  display: flex;
  gap: 12px;
  height: 23px;
  padding: 0 3px 0 2px;
  background: #efefef;
}
.navset { display: flex; gap: 6px; }
.navset.wide { gap: 8px; }
.navset button { gap: 2px; }
.navset svg { width: 18px; height: 18px; }
.status { justify-self: end; padding-right: 33px; color: #222; }

.tooltip {
  position: absolute;
  left: 490px;
  top: 291px;
  padding: 0 4px;
  border: 1px solid #949494;
  background: #ececec;
  box-shadow: 0 4px 10px rgba(0, 0, 0, .25);
  font: 500 13px/17px Inter, "Liberation Sans", sans-serif;
  color: #000;
  white-space: nowrap;
}

.timeline {
  display: flex;
  align-items: center;
  height: 50px;
  padding: 0 4px 1px 10px;
  background: #efefef;
  border-top: 1px solid #bcbcbc;
}
.play { display: flex; gap: 11px; }
.play svg { width: 14px; height: 16px; }
.feature { margin-left: 18px; }
.settings { margin-left: auto; }
```
